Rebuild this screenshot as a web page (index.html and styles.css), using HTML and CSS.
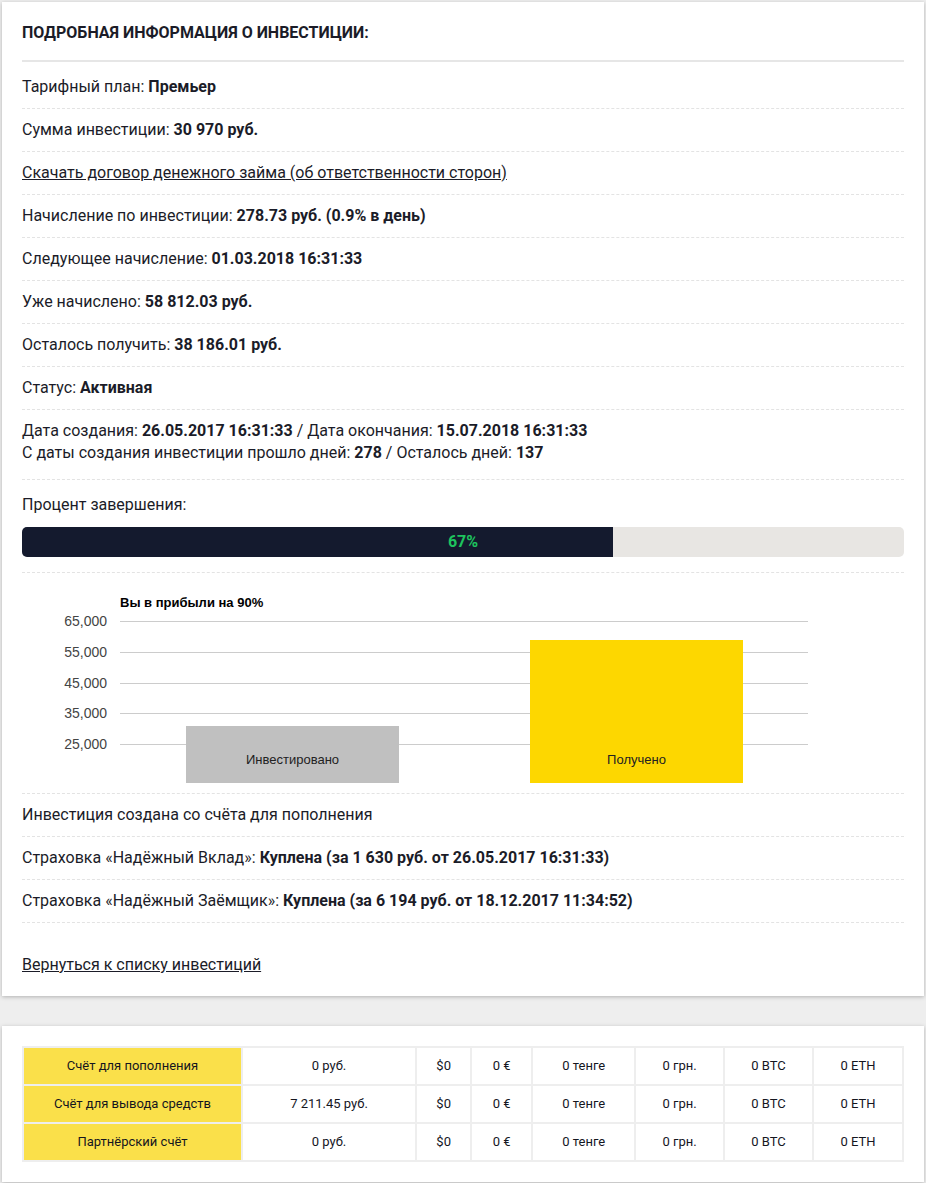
FILE: index.html
```html
<!DOCTYPE html>
<html lang="ru">
<head>
  <meta charset="UTF-8" />
  <meta name="viewport" content="width=device-width, initial-scale=1.0"/>
  <title>Подробная информация о инвестиции</title>
  <link rel="stylesheet" href="styles.css">
</head>
<body>
  <div class="card">
    <h2 class="card-title">Подробная информация о инвестиции:</h2>

    <div class="row">Тарифный план: <b>Премьер</b></div>
    <div class="row">Сумма инвестиции: <b>30 970 руб.</b></div>
    <div class="row"><a href="#">Скачать договор денежного займа (об ответственности сторон)</a></div>
    <div class="row">Начисление по инвестиции: <b>278.73 руб. (0.9% в день)</b></div>
    <div class="row">Следующее начисление: <b>01.03.2018 16:31:33</b></div>
    <div class="row">Уже начислено: <b>58 812.03 руб.</b></div>
    <div class="row">Осталось получить: <b>38 186.01 руб.</b></div>
    <div class="row">Статус: <b>Активная</b></div>
    <div class="row row-dates">
      Дата создания: <b>26.05.2017 16:31:33</b> / Дата окончания: <b>15.07.2018 16:31:33</b><br>
      С даты создания инвестиции прошло дней: <b>278</b> / Осталось дней: <b>137</b>
    </div>

    <div class="row row-progress">
      Процент завершения:
      <div class="progress">
        <div class="progress-fill" style="width: 67%"></div>
        <span class="progress-text">67%</span>
      </div>
    </div>

    <div class="row row-chart">
      <svg class="chart" width="882" height="220" viewBox="0 0 882 220">
        <text class="chart-title" x="98" y="34">Вы в прибыли на 90%</text>
        <g class="grid">
          <line x1="98" y1="48.5" x2="786" y2="48.5"/>
          <line x1="98" y1="79.5" x2="786" y2="79.5"/>
          <line x1="98" y1="110.5" x2="786" y2="110.5"/>
          <line x1="98" y1="140.5" x2="786" y2="140.5"/>
          <line x1="98" y1="171.5" x2="786" y2="171.5"/>
        </g>
        <g class="axis">
          <text x="85" y="53">65,000</text>
          <text x="85" y="84">55,000</text>
          <text x="85" y="115">45,000</text>
          <text x="85" y="145">35,000</text>
          <text x="85" y="176">25,000</text>
        </g>
        <rect x="164" y="153" width="213" height="57" fill="#c0c0c0"/>
        <rect x="508" y="67" width="213" height="143" fill="#fdd700"/>
        <text class="bar-label" x="270.5" y="191">Инвестировано</text>
        <text class="bar-label" x="614.5" y="191">Получено</text>
      </svg>
    </div>

    <div class="row">Инвестиция создана со счёта для пополнения</div>
    <div class="row">Страховка «Надёжный Вклад»: <b>Куплена (за 1 630 руб. от 26.05.2017 16:31:33)</b></div>
    <div class="row">Страховка «Надёжный Заёмщик»: <b>Куплена (за 6 194 руб. от 18.12.2017 11:34:52)</b></div>

    <div class="back"><a href="#">Вернуться к списку инвестиций</a></div>
  </div>

  <div class="card">
    <table class="balances">
      <tr>
        <th>Счёт для пополнения</th>
        <td class="wide">0 руб.</td><td>$0</td><td>0 €</td><td>0 тенге</td><td>0 грн.</td><td>0 BTC</td><td>0 ETH</td>
      </tr>
      <tr>
        <th>Счёт для вывода средств</th>
        <td class="wide">7 211.45 руб.</td><td>$0</td><td>0 €</td><td>0 тенге</td><td>0 грн.</td><td>0 BTC</td><td>0 ETH</td>
      </tr>
      <tr>
        <th>Партнёрский счёт</th>
        <td class="wide">0 руб.</td><td>$0</td><td>0 €</td><td>0 тенге</td><td>0 грн.</td><td>0 BTC</td><td>0 ETH</td>
      </tr>
    </table>
  </div>
</body>
</html>
```

FILE: styles.css
```css
body {
  margin: 0;
  background-color: #eeeeee;
  font-family: Roboto, "Noto Sans", sans-serif;
  font-size: 16px;
  line-height: 22px;
  color: #1b1c28;
}

.card {
  margin: 2px 2px 30px;
  padding: 20px;
  background: #ffffff;
  box-shadow: 0 1px 4px rgba(0, 0, 0, 0.25);
}

.card-title {
  margin: 0 0 4px;
  padding-bottom: 16px;
  border-bottom: 2px solid #e6e6e6;
  font-size: 16px;
  line-height: 22px;
  font-weight: 700;
  text-transform: uppercase;
}

.row {
  padding: 10px 0;
  border-bottom: 1px dashed #e3e3e3;
}

.row b {
  font-weight: 700;
}

a {
  color: inherit;
  text-decoration: underline;
}

.row-dates {
  padding: 10px 0 15px;
}

.row-progress {
  padding: 14px 0 15px;
}

.progress {
  position: relative;
  height: 30px;
  margin-top: 11px;
  background: #e8e6e3;
  border-radius: 5px;
  overflow: hidden;
}

.progress-fill {
  height: 100%;
  background: #141a2e;
}

.progress-text {
  position: absolute;
  top: 0;
  left: 0;
  right: 0;
  line-height: 30px;
  text-align: center;
  color: #1ec45e;
  font-weight: 700;
}

.row-chart {
  padding: 0;
  height: 220px;
}

.chart {
  display: block;
  font-family: "Liberation Sans", Arial, sans-serif;
  font-size: 13px;
}

.chart-title {
  font-weight: 700;
  fill: #000000;
}

.grid line {
  stroke: #cccccc;
  stroke-width: 1;
}

.axis text {
  font-size: 14px;
  fill: #444444;
  text-anchor: end;
}

.bar-label {
  fill: #222222;
  text-anchor: middle;
}

.back {
  padding: 31px 0 0;
}

.balances {
  width: 100%;
  border-collapse: collapse;
  font-size: 13px;
  text-align: center;
  color: #15161f;
}

.balances th,
.balances td {
  height: 36px;
  padding: 0 8px;
  border: 2px solid #eeeeee;
}

.balances th {
  width: 201px;
  background: #fae04a;
  font-weight: 400;
}

.balances .wide {
  width: 156px;
}
```
